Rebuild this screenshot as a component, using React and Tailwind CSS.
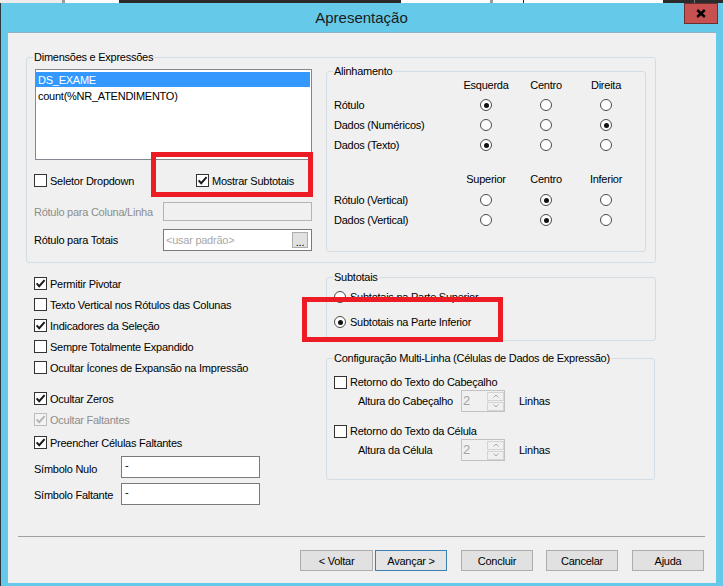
import clsx from "clsx";

function CheckMark({ disabled }) {
  return (
    <svg width="11" height="11" viewBox="0 0 11 11">
      <path
        d="M1.6 5.4 L4.2 8.2 L9.6 2.2"
        fill="none"
        stroke={disabled ? "#b5b5b5" : "#1a1a1a"}
        strokeWidth="2"
      />
    </svg>
  );
}

function CheckBox({ checked, disabled, label, className }) {
  return (
    <div className={clsx("flex items-center", className)}>
      <span
        className={clsx(
          "flex h-[13px] w-[13px] shrink-0 items-center justify-center border",
          disabled ? "border-[#bcbcbc] bg-[#f4f4f4]" : "border-[#333] bg-white"
        )}
      >
        {checked && <CheckMark disabled={disabled} />}
      </span>
      <span className={clsx("ml-[3px] whitespace-nowrap", disabled && "text-[#8d8d8d]")}>{label}</span>
    </div>
  );
}

function Radio({ checked }) {
  return (
    <span className="flex h-[12px] w-[12px] shrink-0 items-center justify-center rounded-full border border-[#4a4a4a] bg-white">
      {checked && <span className="h-[5px] w-[5px] rounded-full bg-[#111]" />}
    </span>
  );
}

function Group({ title, className, children }) {
  return (
    <fieldset className={clsx("rounded-[3px] border border-[#d3dde3] px-[6px]", className)}>
      <legend className="px-[1px] leading-[14px]">{title}</legend>
      {children}
    </fieldset>
  );
}

function RadioRow({ label, sel }) {
  return (
    <div className="flex h-[20px] items-center">
      <span className="ml-[1px] w-[122px] whitespace-nowrap">{label}</span>
      {[0, 1, 2].map((i) => (
        <span key={i} className="flex w-[60px] justify-center">
          <Radio checked={i === sel} />
        </span>
      ))}
    </div>
  );
}

function HeaderRow({ cols, className }) {
  return (
    <div className={clsx("flex h-[14px] items-center", className)}>
      <span className="ml-[1px] w-[122px]" />
      {cols.map((c) => (
        <span key={c} className="w-[60px] text-center">
          {c}
        </span>
      ))}
    </div>
  );
}

function Spinner() {
  return (
    <div className="flex h-[22px] w-[44px] items-center justify-between border border-[#c2c2c2] bg-[#f0f0f0] pl-[1px] pr-[0px]">
      <span className="text-[13px] text-[#a3a3a3]">2</span>
      <div className="flex flex-col gap-[1px]">
        <span className="flex h-[9px] w-[17px] items-center justify-center border border-[#d4d4d4]">
          <svg width="6" height="4" viewBox="0 0 6 4">
            <path d="M0.5 3.5 L3 1 L5.5 3.5" fill="none" stroke="#a8a8a8" strokeWidth="1" />
          </svg>
        </span>
        <span className="flex h-[9px] w-[17px] items-center justify-center border border-[#d4d4d4]">
          <svg width="6" height="4" viewBox="0 0 6 4">
            <path d="M0.5 0.5 L3 3 L5.5 0.5" fill="none" stroke="#a8a8a8" strokeWidth="1" />
          </svg>
        </span>
      </div>
    </div>
  );
}

export default function App() {
  return (
    <div className="relative flex h-[586px] w-[723px] flex-col overflow-hidden bg-[#65c9e9] font-['Liberation_Sans',Arial,sans-serif] text-[11px] leading-[14px] tracking-[-0.25px] text-black">
      {/* desktop behind the window */}
      <div className="flex h-[3px] shrink-0">
        <div className="w-[62px] bg-[#ececec]" />
        <div className="w-[3px] bg-[#9a9a9a]" />
        <div className="w-[54px] bg-white" />
        <div className="w-[282px] bg-[#2b2b2b]" />
        <div className="w-[89px] bg-white" />
        <div className="w-[3px] bg-[#9a9a9a]" />
        <div className="w-[30px] bg-white" />
        <div className="w-[1px] bg-[#2b2b2b]" />
        <div className="w-[139px] bg-white" />
        <div className="w-[31px] bg-[#2b2b2b]" />
        <div className="w-[1px] bg-[#777]" />
        <div className="w-[28px] bg-[#2b2b2b]" />
      </div>

      <div className="flex flex-1 flex-col border-l border-[#2e3a40]">
        {/* title bar */}
        <div className="flex h-[29px] shrink-0">
          <div className="w-[38px]" />
          <div className="flex flex-1 items-center justify-center pt-[1px] text-[15px] tracking-normal text-[#1b1b1b]">
            Apresentação
          </div>
          <div className="w-[39px]">
            <div className="flex h-[21px] w-[34px] items-center justify-center border border-[#6b2f2f] bg-[#c75050]">
              <svg width="10" height="9" viewBox="0 0 10 9">
                <path d="M1.2 1 L8.8 8 M8.8 1 L1.2 8" stroke="#000" strokeWidth="2.4" />
              </svg>
            </div>
          </div>
        </div>

        {/* dialog body */}
        <div className="ml-[7px] flex h-[551px] w-[708px] flex-col border-t border-[#8fb3c4] bg-[#f0f0f0] px-[10px] pt-[17px]">
          <Group title="Dimensões e Expressões" className="ml-[8px] h-[213px] w-[630px]">
            <div className="flex">
              <div className="flex w-[280px] flex-col">
                <div className="ml-[2px] mt-[5px] h-[91px] w-[277px] border border-[#828790] bg-white pt-[2px]">
                  <div className="mr-[1px] flex h-[15px] items-center bg-[#3399ff] pl-[2px] text-white">DS_EXAME</div>
                  <div className="mt-[1px] flex h-[15px] items-center pl-[2px]">count(%NR_ATENDIMENTO)</div>
                </div>
                <div className="ml-[1px] mt-[14px] flex h-[13px] items-center">
                  <CheckBox label="Seletor Dropdown" className="w-[162px]" />
                  <CheckBox label="Mostrar Subtotais" checked />
                </div>
                <div className="ml-[1px] mt-[15px] flex h-[19px] items-center">
                  <span className="w-[129px] whitespace-nowrap text-[#8d8d8d]">Rótulo para Coluna/Linha</span>
                  <div className="h-[19px] w-[149px] border border-[#b4b4b4] bg-[#f0f0f0]" />
                </div>
                <div className="ml-[1px] mt-[8px] flex h-[22px] items-center">
                  <span className="w-[129px] whitespace-nowrap">Rótulo para Totais</span>
                  <div className="flex h-[22px] w-[149px] items-center justify-between border border-[#7a7a7a] bg-white pl-[2px] pr-[3px]">
                    <span className="text-[#a8a8a8]">&lt;usar padrão&gt;</span>
                    <span className="flex h-[16px] w-[16px] items-end justify-center border border-[#adadad] bg-[#e1e1e1] pb-[1px] leading-[8px]">
                      ...
                    </span>
                  </div>
                </div>
              </div>

              <Group title="Alinhamento" className="ml-[13px] h-[188px] w-[320px]">
                <HeaderRow cols={["Esquerda", "Centro", "Direita"]} />
                <div className="mt-[3px]">
                  <RadioRow label="Rótulo" sel={0} />
                  <RadioRow label="Dados (Numéricos)" sel={2} />
                  <RadioRow label="Dados (Texto)" sel={0} />
                </div>
                <HeaderRow cols={["Superior", "Centro", "Inferior"]} className="mt-[17px]" />
                <div className="mt-[4px]">
                  <RadioRow label="Rótulo (Vertical)" sel={1} />
                  <RadioRow label="Dados (Vertical)" sel={1} />
                </div>
              </Group>
            </div>
          </Group>

          <div className="ml-[8px] flex h-[273px]">
            <div className="ml-[8px] flex w-[292px] flex-col pt-[10px]">
              <CheckBox label="Permitir Pivotar" checked className="h-[21px]" />
              <CheckBox label="Texto Vertical nos Rótulos das Colunas" className="h-[21px]" />
              <CheckBox label="Indicadores da Seleção" checked className="h-[21px]" />
              <CheckBox label="Sempre Totalmente Expandido" className="h-[21px]" />
              <CheckBox label="Ocultar Ícones de Expansão na Impressão" className="h-[21px]" />
              <CheckBox label="Ocultar Zeros" checked className="mt-[10px] h-[21px]" />
              <CheckBox label="Ocultar Faltantes" checked disabled className="h-[21px]" />
              <CheckBox label="Preencher Células Faltantes" checked className="mt-[2px] h-[21px]" />
              <div className="mt-[3px] flex h-[22px] items-center">
                <span className="w-[87px] whitespace-nowrap pt-[3px]">Símbolo Nulo</span>
                <div className="h-[22px] w-[139px] border border-[#7a7a7a] bg-white pl-[3px] pt-[1px]">-</div>
              </div>
              <div className="mt-[5px] flex h-[22px] items-center">
                <span className="w-[87px] whitespace-nowrap pt-[2px]">Símbolo Faltante</span>
                <div className="h-[22px] w-[139px] border border-[#7a7a7a] bg-white pl-[3px] pt-[1px]">-</div>
              </div>
            </div>

            <div className="flex flex-col">
              <Group title="Subtotais" className="mt-[7px] h-[71px] w-[330px]">
                <div className="ml-[1px] mt-[3px] flex h-[20px] items-center">
                  <Radio />
                  <span className="ml-[4px]">Subtotais na Parte Superior</span>
                </div>
                <div className="ml-[1px] mt-[5px] flex h-[20px] items-center">
                  <Radio checked />
                  <span className="ml-[4px]">Subtotais na Parte Inferior</span>
                </div>
              </Group>

              <Group title="Configuração Multi-Linha (Células de Dados de Expressão)" className="mt-[10px] h-[129px] w-[329px]">
                <CheckBox label="Retorno do Texto do Cabeçalho" className="ml-[1px] mt-[9px] h-[16px]" />
                <div className="ml-[25px] flex h-[22px] items-center">
                  <span className="w-[103px] whitespace-nowrap">Altura do Cabeçalho</span>
                  <Spinner />
                  <span className="ml-[14px]">Linhas</span>
                </div>
                <CheckBox label="Retorno do Texto da Célula" className="ml-[1px] mt-[11px] h-[16px]" />
                <div className="ml-[25px] flex h-[22px] items-center">
                  <span className="w-[103px] whitespace-nowrap">Altura da Célula</span>
                  <Spinner />
                  <span className="ml-[14px]">Linhas</span>
                </div>
              </Group>
            </div>
          </div>

          <div className="h-[1px] w-[687px] bg-[#a0a0a0]" />

          <div className="ml-[282px] mt-[13px] flex">
            <button className="h-[21px] w-[73px] border border-[#adadad] bg-[#e1e1e1]">&lt; Voltar</button>
            <button className="ml-[2px] h-[21px] w-[72px] border border-[#3c7fb1] bg-[#e5e5e5]">Avançar &gt;</button>
            <button className="ml-[14px] h-[21px] w-[72px] border border-[#adadad] bg-[#e1e1e1]">Concluir</button>
            <button className="ml-[13px] h-[21px] w-[72px] border border-[#adadad] bg-[#e1e1e1]">Cancelar</button>
            <button className="ml-[14px] h-[21px] w-[72px] border border-[#adadad] bg-[#e1e1e1]">Ajuda</button>
          </div>
        </div>
      </div>

      {/* red annotation frames drawn over the dialog */}
      <div className="pointer-events-none absolute left-[151px] top-[152px] h-[45px] w-[162px] border-[5px] border-[#ed1c24]" />
      <div className="pointer-events-none absolute left-[302px] top-[297px] h-[45px] w-[201px] border-[5px] border-[#ed1c24]" />
    </div>
  );
}
